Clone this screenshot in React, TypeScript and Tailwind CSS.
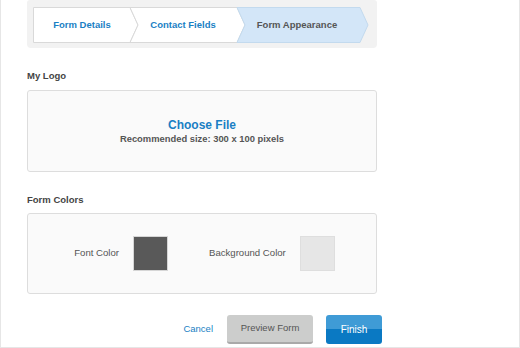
import React from 'react';

interface StepProps {
  label: string;
  width: number;
  points: string;
  active?: boolean;
  className?: string;
}

function Step({ label, width, points, active = false, className = '' }: StepProps) {
  return (
    <div className={`relative flex h-[36px] shrink-0 items-center justify-center ${className}`} style={{ width }}>
      <svg className="absolute inset-0 overflow-visible" width={width} height={36}>
        <polygon
          points={points}
          fill={active ? '#d3e6f8' : '#ffffff'}
          stroke={active ? '#c3daee' : '#d9d9d9'}
          strokeWidth={1}
        />
      </svg>
      <span
        className={`relative text-[9.5px] font-bold ${active ? 'text-[#555555]' : 'text-[#1a7fc4]'}`}
      >
        {label}
      </span>
    </div>
  );
}

function Swatch({ color, border }: { color: string; border: string }) {
  return <div className={`h-[35px] w-[35px] border ${border} ${color}`} />;
}

export default function App() {
  return (
    <div
      className="h-[348px] w-[520px] border-x border-b border-[#e6e6e6] bg-white pl-[26px]"
      style={{ fontFamily: '"Liberation Sans", Arial, sans-serif' }}
    >
      {/* Steps */}
      <div className="flex h-[48px] w-[350px] rounded-b-[4px] rounded-t-[3px] bg-[#f2f2f2] pl-[6px] pt-[7px]">
        <Step
          label="Form Details"
          width={105}
          points="0.5,0.5 97,0.5 105,18 97,35.5 0.5,35.5"
          className="pr-[7px]"
        />
        <Step
          label="Contact Fields"
          width={115}
          points="0,0.5 107,0.5 115,18 107,35.5 0,35.5 8,18"
          className="-ml-[8px] pr-[9px]"
        />
        <Step
          label="Form Appearance"
          width={131}
          points="0,0.5 123,0.5 131,18 123,35.5 0,35.5 8,18"
          active
          className="-ml-[8px] pr-[11px]"
        />
      </div>

      {/* Logo */}
      <div className="mt-[22px] text-[9.5px] font-bold leading-[12px] text-[#444444]">My Logo</div>
      <div className="mt-[8px] flex h-[82px] w-[350px] flex-col items-center justify-center rounded-[3px] border border-[#dddddd] bg-[#fafafa]">
        <span className="text-[12px] font-bold leading-[14px] text-[#1a7fc4]">Choose File</span>
        <span className="mt-[1px] text-[9.4px] font-bold leading-[12px] text-[#555555]">
          Recommended size: 300 x 100 pixels
        </span>
      </div>

      {/* Colors */}
      <div className="mt-[22px] text-[9.5px] font-bold leading-[12px] text-[#444444]">Form Colors</div>
      <div className="mt-[7px] flex h-[81px] w-[350px] items-center justify-center rounded-[3px] border border-[#dddddd] bg-[#fafafa] pl-[5px] text-[9.6px] text-[#555555]">
        <span>Font Color</span>
        <div className="ml-[14px]">
          <Swatch color="bg-[#595959]" border="border-[#d6d6d6]" />
        </div>
        <span className="ml-[41px]">Background Color</span>
        <div className="ml-[14px]">
          <Swatch color="bg-[#e6e6e6]" border="border-[#dedede]" />
        </div>
      </div>

      {/* Actions */}
      <div className="mt-[21px] flex w-[355px] items-center justify-end text-[9.5px]">
        <button className="text-[#1a7fc4]">Cancel</button>
        <button className="ml-[14px] h-[29px] w-[86px] rounded-[3px] border-b-2 border-[#a9a9a9] bg-[#cccdcc] text-[#555555]">
          Preview Form
        </button>
        <button className="ml-[13px] h-[29px] w-[56px] rounded-[3px] bg-[linear-gradient(#3f9bd6_0%,#3f9bd6_50%,#0a79c3_50%,#0a79c3_100%)] text-[10px] text-white">
          Finish
        </button>
      </div>
    </div>
  );
}
